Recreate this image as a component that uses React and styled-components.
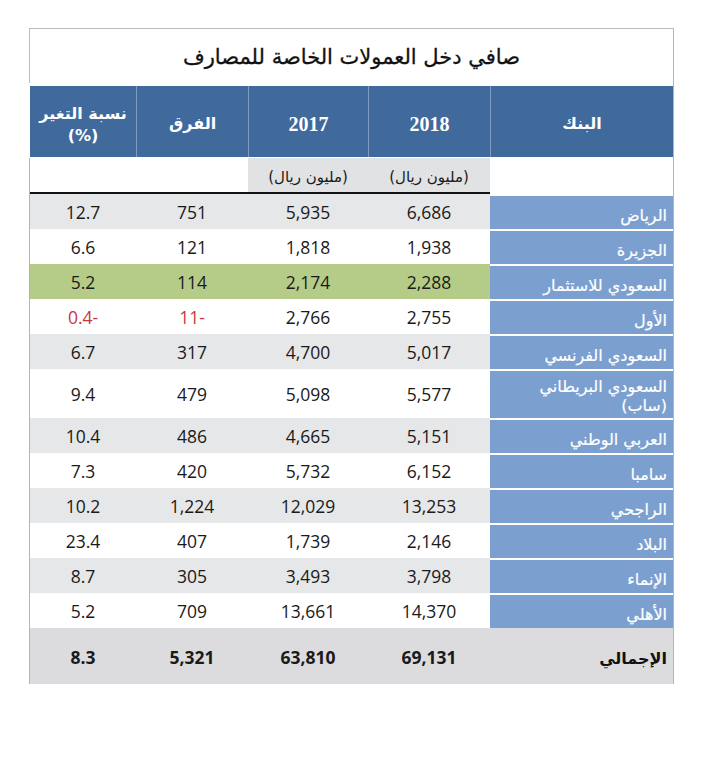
import React from 'react'
import styled, { createGlobalStyle } from 'styled-components';

const GlobalStyle = createGlobalStyle`
    body {
        margin: 0;
        background: #ffffff;
        font-family: "DejaVu Sans", sans-serif;
    }
`;

const COLS = '183px 122px 120px 112px 106px';

const banks = [
    { name: 'الرياض', y18: '6,686', y17: '5,935', diff: '751', pct: '12.7', tone: 'gray' },
    { name: 'الجزيرة', y18: '1,938', y17: '1,818', diff: '121', pct: '6.6', tone: 'white' },
    { name: 'السعودي للاستثمار', y18: '2,288', y17: '2,174', diff: '114', pct: '5.2', tone: 'green' },
    { name: 'الأول', y18: '2,755', y17: '2,766', diff: '11-', pct: '0.4-', tone: 'white', negative: true },
    { name: 'السعودي الفرنسي', y18: '5,017', y17: '4,700', diff: '317', pct: '6.7', tone: 'gray' },
    { name: 'السعودي البريطاني (ساب)', y18: '5,577', y17: '5,098', diff: '479', pct: '9.4', tone: 'white', tall: true },
    { name: 'العربي الوطني', y18: '5,151', y17: '4,665', diff: '486', pct: '10.4', tone: 'gray' },
    { name: 'سامبا', y18: '6,152', y17: '5,732', diff: '420', pct: '7.3', tone: 'white' },
    { name: 'الراجحي', y18: '13,253', y17: '12,029', diff: '1,224', pct: '10.2', tone: 'gray' },
    { name: 'البلاد', y18: '2,146', y17: '1,739', diff: '407', pct: '23.4', tone: 'white' },
    { name: 'الإنماء', y18: '3,798', y17: '3,493', diff: '305', pct: '8.7', tone: 'gray' },
    { name: 'الأهلي', y18: '14,370', y17: '13,661', diff: '709', pct: '5.2', tone: 'white' },
];

const TONES = {
    gray: '#e6e7e8',
    white: '#ffffff',
    green: '#b5cc88',
    total: '#dcdcde',
};

export default function App() {
    return (
        <>
            <GlobalStyle />
            <Frame dir="rtl">
                <Title>صافي دخل العمولات الخاصة للمصارف</Title>
                <Header>
                    <HeadCell>البنك</HeadCell>
                    <HeadCell $year>2018</HeadCell>
                    <HeadCell $year>2017</HeadCell>
                    <HeadCell>الفرق</HeadCell>
                    <HeadCell $last>نسبة التغير<br />(%)</HeadCell>
                </Header>
                <Body>
                    <UnitsRow>
                        <BlankCell />
                        <UnitCell $shaded>(مليون ريال)</UnitCell>
                        <UnitCell $shaded>(مليون ريال)</UnitCell>
                        <UnitCell />
                        <UnitCell />
                    </UnitsRow>
                    {banks.map((b) => (
                        <Row key={b.name} $tall={b.tall}>
                            <BankCell $tall={b.tall}>{b.name}</BankCell>
                            <NumCell $tone={b.tone}>{b.y18}</NumCell>
                            <NumCell $tone={b.tone}>{b.y17}</NumCell>
                            <NumCell $tone={b.tone} $red={b.negative}>{b.diff}</NumCell>
                            <NumCell $tone={b.tone} $red={b.negative}>{b.pct}</NumCell>
                        </Row>
                    ))}
                    <TotalRow>
                        <TotalLabel>الإجمالي</TotalLabel>
                        <NumCell $tone="total" $bold>69,131</NumCell>
                        <NumCell $tone="total" $bold>63,810</NumCell>
                        <NumCell $tone="total" $bold>5,321</NumCell>
                        <NumCell $tone="total" $bold>8.3</NumCell>
                    </TotalRow>
                </Body>
            </Frame>
        </>
    )
}

const Frame = styled.div`
    margin: 28px 0 0 29px;
    width: 645px;
    border-right: 1px solid #b4b4b4;
    box-sizing: border-box;
`;

const Title = styled.div`
    height: 55px;
    box-sizing: border-box;
    border-top: 1px solid #bcbcbc;
    border-left: 1px solid #bcbcbc;
    display: flex;
    align-items: center;
    justify-content: center;
    padding-top: 2px;
    font-size: 21px;
    color: #111;
    -webkit-text-stroke: 0.3px #111;
    margin-bottom: 3px;
`;

const Header = styled.div`
    display: grid;
    grid-template-columns: ${COLS};
    height: 71px;
    margin-left: 1px;
    background: #40699c;
    margin-bottom: 1px;
`;

const HeadCell = styled.div`
    display: flex;
    align-items: center;
    justify-content: center;
    text-align: center;
    color: #ffffff;
    font-weight: bold;
    font-size: ${p => p.$year ? '20px' : '16px'};
    line-height: 22px;
    font-family: ${p => p.$year ? '"Liberation Serif", serif' : '"DejaVu Sans", sans-serif'};
    border-left: ${p => p.$last ? 'none' : '1px solid #7e9bc2'};
    padding-top: ${p => p.$last ? '7px' : '4px'};
`;

const Body = styled.div`
    border-left: 1px solid #b4b4b4;
`;

const UnitsRow = styled.div`
    display: grid;
    grid-template-columns: ${COLS};
    height: 36px;
`;

const BlankCell = styled.div`
    background: #ffffff;
`;

const UnitCell = styled.div`
    background: ${p => p.$shaded ? '#e1e2e3' : '#ffffff'};
    border-bottom: 2px solid #111;
    display: flex;
    align-items: center;
    justify-content: center;
    font-size: 15px;
    color: #1a1a1a;
    padding-top: 3px;
    box-sizing: border-box;
`;

const Row = styled.div`
    display: grid;
    grid-template-columns: ${COLS};
    height: ${p => p.$tall ? '49px' : '35px'};
`;

const BankCell = styled.div`
    background: #7ba0cf;
    border-top: 2px solid #ffffff;
    color: #ffffff;
    font-size: 16px;
    line-height: 19px;
    -webkit-text-stroke: 0.2px #ffffff;
    display: flex;
    align-items: flex-end;
    padding: 0 6px ${p => p.$tall ? '3px' : '4px'} 8px;
    box-sizing: border-box;
`;

const NumCell = styled.div`
    background: ${p => TONES[p.$tone]};
    direction: ltr;
    display: flex;
    align-items: center;
    justify-content: center;
    font-family: "Open Sans", sans-serif;
    font-size: 17.5px;
    font-weight: ${p => p.$bold ? 700 : 400};
    color: ${p => p.$red ? '#c9353c' : '#1a1a1a'};
    padding-top: 1px;
`;

const TotalRow = styled.div`
    display: grid;
    grid-template-columns: ${COLS};
    height: 56px;
`;

const TotalLabel = styled.div`
    background: ${TONES.total};
    display: flex;
    align-items: center;
    padding: 4px 6px 0 0;
    font-size: 16px;
    font-weight: bold;
    color: #111;
`;
